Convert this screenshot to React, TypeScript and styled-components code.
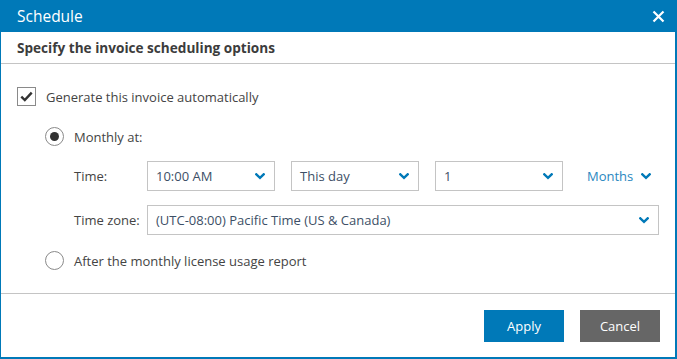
import React from 'react';
import styled, { createGlobalStyle } from 'styled-components';

const GlobalStyle = createGlobalStyle`
  html, body { margin: 0; padding: 0; background: #ffffff; }
  body { font-family: "Open Sans", "Noto Sans", sans-serif; font-size: 13px; color: #444444; }
  * { box-sizing: border-box; }
`

const Dialog = styled.div`
  width: 677px;
  height: 359px;
  display: flex;
  flex-direction: column;
  border-left: 1px solid #0079b8;
  border-right: 2px solid #0079b8;
  border-bottom: 2px solid #0079b8;
  background: #fff;
`
const Header = styled.header`
  height: 32px;
  flex-shrink: 0;
  background: #0079b8;
  color: #fff;
  display: flex;
  align-items: center;
  justify-content: space-between;
  padding: 0 11px 0 17px;
  font-size: 15.5px;
  margin-left: -1px;
  margin-right: -2px;
`
const CloseButton = styled.button`
  background: none;
  border: none;
  padding: 0;
  width: 16px;
  height: 16px;
  display: flex;
  align-items: center;
  justify-content: center;
  cursor: pointer;
  > svg { width: 13px; height: 13px; }
`
const SubHeader = styled.div`
  height: 32px;
  flex-shrink: 0;
  border-bottom: 1px solid #c4c4c4;
  display: flex;
  align-items: center;
  padding: 0 16px;
  font-weight: 700;
  font-size: 13.6px;
  color: #3c3c3c;
`
const Body = styled.section`
  flex-grow: 1;
  padding: 23px 16px 0 16px;
`
const OptionRow = styled.label<{ $top?: number; $indent?: number }>`
  display: flex;
  align-items: center;
  height: 19px;
  margin-top: ${p => p.$top ?? 0}px;
  margin-left: ${p => p.$indent ?? 0}px;
  gap: 10px;
  cursor: pointer;
`
const CheckBox = styled.span`
  width: 19px;
  height: 19px;
  border: 1px solid #8a8a8a;
  display: flex;
  align-items: center;
  justify-content: center;
  > svg { width: 13px; height: 11px; }
`
const Radio = styled.span<{ $checked?: boolean }>`
  width: 19px;
  height: 19px;
  border-radius: 50%;
  border: 1px solid #8a8a8a;
  display: flex;
  align-items: center;
  justify-content: center;
  &::after {
    content: '';
    display: ${p => (p.$checked ? 'block' : 'none')};
    width: 9px;
    height: 9px;
    border-radius: 50%;
    background: #333;
  }
`
const FormGrid = styled.div`
  margin: 15px 0 0 57px;
  display: grid;
  grid-template-columns: 73px 1fr;
  row-gap: 14px;
  align-items: center;
`
const FieldLabel = styled.span`
  color: #444;
`
const SelectGroup = styled.div`
  display: flex;
  align-items: center;
  gap: 16px;
`
const Select = styled.div<{ $wide?: boolean }>`
  width: ${p => (p.$wide ? 'auto' : '128px')};
  height: 30px;
  border: 1px solid #c4c4c4;
  display: flex;
  align-items: center;
  justify-content: space-between;
  padding: 0 9px 0 8px;
  color: #3d4f66;
  > svg { width: 10px; height: 7px; flex-shrink: 0; }
`
const LinkSelect = styled.div`
  margin-left: 8px;
  display: flex;
  align-items: center;
  gap: 8px;
  color: #2a87c0;
  > svg { width: 10px; height: 7px; }
`
const Footer = styled.footer`
  height: 64px;
  flex-shrink: 0;
  border-top: 1px solid #c4c4c4;
  display: flex;
  justify-content: flex-end;
  align-items: flex-start;
  gap: 16px;
  padding: 16px 15px 0 0;
`
const Button = styled.button<{ $primary?: boolean }>`
  width: 80px;
  height: 32px;
  border: none;
  font-family: inherit;
  font-size: 13px;
  color: #fff;
  background: ${p => (p.$primary ? '#0079b8' : '#666666')};
  cursor: pointer;
`

const Chevron = () => (
  <svg viewBox="0 0 10 7" fill="none">
    <path d="M1.3 1.3 L5 4.9 L8.7 1.3" stroke="#0079b8" strokeWidth="2.4" strokeLinecap="square" />
  </svg>
)

function App() {
  return (
    <Dialog>
      <GlobalStyle />
      <Header>
        Schedule
        <CloseButton>
          <svg viewBox="0 0 13 13">
            <path d="M1.5 1.5 L11.5 11.5 M11.5 1.5 L1.5 11.5" stroke="#fff" strokeWidth="2.2" />
          </svg>
        </CloseButton>
      </Header>
      <SubHeader>Specify the invoice scheduling options</SubHeader>
      <Body>
        <OptionRow>
          <CheckBox>
            <svg viewBox="0 0 13 11" fill="none">
              <path d="M1.3 5.6 L4.8 9 L11.7 1.6" stroke="#333" strokeWidth="2.4" />
            </svg>
          </CheckBox>
          Generate this invoice automatically
        </OptionRow>
        <OptionRow $top={21} $indent={28}>
          <Radio $checked />
          Monthly at:
        </OptionRow>
        <FormGrid>
          <FieldLabel>Time:</FieldLabel>
          <SelectGroup>
            <Select>10:00 AM<Chevron /></Select>
            <Select>This day<Chevron /></Select>
            <Select>1<Chevron /></Select>
            <LinkSelect>Months<Chevron /></LinkSelect>
          </SelectGroup>
          <FieldLabel>Time zone:</FieldLabel>
          <Select $wide>(UTC-08:00) Pacific Time (US &amp; Canada)<Chevron /></Select>
        </FormGrid>
        <OptionRow $top={16} $indent={28}>
          <Radio />
          After the monthly license usage report
        </OptionRow>
      </Body>
      <Footer>
        <Button $primary>Apply</Button>
        <Button>Cancel</Button>
      </Footer>
    </Dialog>
  )
}
export default App
